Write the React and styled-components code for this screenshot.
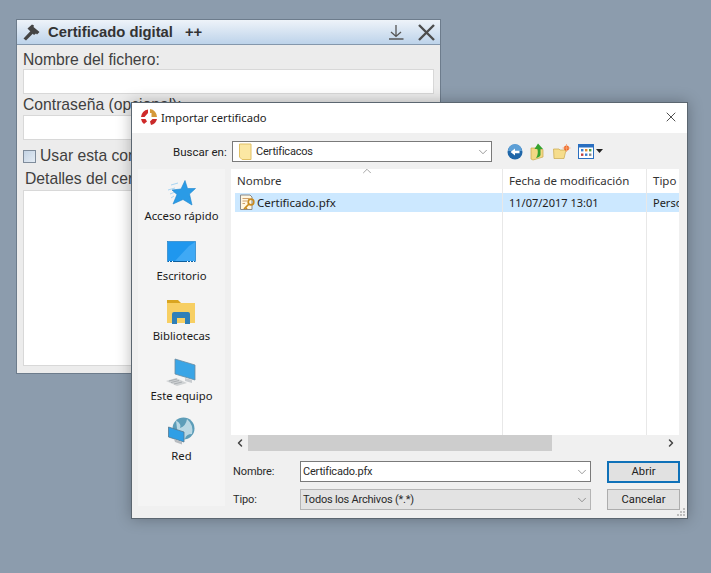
import styled, { createGlobalStyle } from "styled-components";
import { X, ChevronDown, ChevronUp, ChevronLeft, ChevronRight } from "lucide-react";

const GlobalStyle = createGlobalStyle`
  html, body {
    margin: 0;
    height: 100%;
    background: #8c9cad;
    overflow: hidden;
  }
  #root { height: 100%; }
`;

const Desktop = styled.div`
  position: relative;
  width: 711px;
  height: 573px;
  background: #8c9cad;
`;

/* ventana java de atras */
const JavaWindow = styled.div`
  position: absolute;
  left: 16px;
  top: 19px;
  width: 425px;
  height: 355px;
  box-sizing: border-box;
  border: 1px solid #6d7c8c;
  background: #ececec;
  font-family: "Liberation Sans", Arial, sans-serif;
  color: #404040;
  display: flex;
  flex-direction: column;
`;

const JavaTitle = styled.div`
  height: 25px;
  flex: none;
  box-sizing: border-box;
  display: flex;
  align-items: center;
  padding: 0 5px 0 6px;
  background: linear-gradient(#eef3f9, #bdd3ea);
  border-bottom: 1px solid #8497ac;
  color: #333;
`;

const JavaTitleText = styled.span`
  font-size: 14.8px;
  font-weight: 700;
  margin-left: 8px;
`;

const PlusPlus = styled.span`
  font-size: 14.8px;
  font-weight: 700;
  margin-left: 12px;
  flex: 1;
`;

const JavaBody = styled.div`
  flex: 1;
  display: flex;
  flex-direction: column;
  padding: 0 6px 7px 6px;
`;

const JavaLabel = styled.div`
  font-size: 15.7px;
  line-height: 18px;
  margin-top: ${(p) => p.$top || 2}px;
  margin-left: ${(p) => p.$left || 0}px;
  white-space: nowrap;
`;

const JavaInput = styled.div`
  height: 25px;
  flex: none;
  box-sizing: border-box;
  background: #fff;
  border: 1px solid #d8d8d8;
  margin-top: ${(p) => p.$top ?? 1}px;
`;

const JavaCheckRow = styled.div`
  display: flex;
  align-items: center;
  gap: 4px;
  font-size: 15.7px;
  line-height: 18px;
  margin-top: 7px;
  white-space: nowrap;
`;

const JavaCheck = styled.span`
  width: 13px;
  height: 13px;
  box-sizing: border-box;
  border: 1px solid #7f8c9b;
  background: linear-gradient(135deg, #c3d3e4, #e4ecf4);
`;

const JavaArea = styled.div`
  flex: 1;
  background: #fff;
  border: 1px solid #d8d8d8;
  margin-top: 2px;
`;

/* dialogo de windows */
const Dialog = styled.div`
  position: absolute;
  left: 131px;
  top: 102px;
  width: 557px;
  height: 417px;
  box-sizing: border-box;
  border: 1px solid #5b6670;
  background: #f0f0f0;
  box-shadow: 0 0 14px rgba(0, 0, 0, 0.28);
  font-family: "Noto Sans", "Open Sans", sans-serif;
  font-size: 11px;
  color: #1a1a1a;
  display: flex;
  flex-direction: column;
`;

const DialogTitle = styled.div`
  height: 30px;
  flex: none;
  box-sizing: border-box;
  background: #fff;
  display: flex;
  align-items: center;
  padding: 0 8px 2px 8px;
  font-size: 11.2px;
  color: #222;
`;

const DialogTitleText = styled.span`
  margin-left: 3px;
  flex: 1;
`;

const LookRow = styled.div`
  height: 36px;
  flex: none;
  box-sizing: border-box;
  display: flex;
  align-items: center;
  padding: 1px 0 0 41px;
`;

const LookLabel = styled.span`
  width: 59px;
  font-family: Roboto, sans-serif;
  font-size: 11.5px;
  color: #222;
`;

const Combo = styled.div`
  box-sizing: border-box;
  height: 21px;
  width: ${(p) => p.$w}px;
  display: flex;
  align-items: center;
  padding: 0 1px 0 ${(p) => p.$pad || 2}px;
  gap: 4px;
  background: ${(p) => (p.$gray ? "#e3e3e3" : "#fff")};
  border: 1px solid ${(p) => (p.$gray ? "#b5b5b5" : "#7a7a7a")};
  font-family: Roboto, sans-serif;
  font-size: 11px;
  letter-spacing: -0.2px;
  color: #2a2a2a;
`;

const ComboText = styled.span`
  flex: 1;
  white-space: nowrap;
`;

const Tools = styled.div`
  display: flex;
  align-items: center;
  margin-left: 15px;
  gap: 7px;
`;

const Main = styled.div`
  flex: 1;
  min-height: 0;
  display: flex;
  padding: 0 8px 12px 6px;
`;

const Places = styled.div`
  width: 87px;
  flex: none;
  margin-right: 6px;
  background: #f4f4f4;
  display: flex;
  flex-direction: column;
  align-items: center;
  padding-top: 3px;
  box-sizing: border-box;
  font-size: 11.3px;
`;

const Place = styled.div`
  height: 60px;
  flex: none;
  display: flex;
  flex-direction: column;
  align-items: center;
  white-space: nowrap;
`;

const PlaceIcon = styled.div`
  height: 36px;
  flex: none;
  box-sizing: border-box;
  display: flex;
  align-items: flex-end;
  padding-bottom: ${(p) => p.$gap}px;

  svg { display: block; }
`;

const PlaceLabel = styled.span`
  line-height: 16px;
`;

const RightPane = styled.div`
  flex: 1;
  min-width: 0;
  display: flex;
  flex-direction: column;
`;

const List = styled.div`
  height: 282px;
  flex: none;
  background: #fff;
  display: flex;
  flex-direction: column;
  overflow: hidden;
`;

const Columns = styled.div`
  flex: 1;
  min-height: 0;
  display: grid;
  grid-template-columns: 272px 144px 32px;
`;

const Column = styled.div`
  border-right: ${(p) => (p.$last ? "none" : "1px solid #e8e8e8")};
  overflow: hidden;
  position: relative;
  display: flex;
  flex-direction: column;
`;

const HeadCell = styled.div`
  height: 24px;
  flex: none;
  box-sizing: border-box;
  display: flex;
  align-items: center;
  padding: 0 0 2px 6px;
  font-size: 11.5px;
  color: #333;
  white-space: nowrap;
`;

const SortMark = styled.span`
  position: absolute;
  top: -5px;
  left: 129px;
  color: #666;
  line-height: 0;
`;

const RowCell = styled.div`
  height: 19px;
  display: flex;
  align-items: center;
  margin-left: ${(p) => p.$ml || 0}px;
  padding-left: ${(p) => p.$pad || 6}px;
  background: #cce8ff;
  color: #222;
  gap: 1px;
  white-space: nowrap;
  font-size: ${(p) => p.$size || 11}px;
`;

const HScroll = styled.div`
  height: 16px;
  flex: none;
  display: flex;
  align-items: center;
  background: #f0f0f0;
`;

const ScrollBtn = styled.span`
  width: 17px;
  display: flex;
  justify-content: center;
  color: #444;
`;

const ScrollTrack = styled.div`
  flex: 1;
  height: 100%;
`;

const ScrollThumb = styled.div`
  width: 304px;
  height: 100%;
  background: #cdcdcd;
`;

const FormGrid = styled.div`
  display: grid;
  grid-template-columns: 67px 291px 89px;
  row-gap: 6px;
  padding: 10px 0 0 2px;
  align-items: start;
`;

const FormLabel = styled.span`
  font-family: Roboto, sans-serif;
  font-size: 11px;
  line-height: 21px;
  letter-spacing: -0.1px;
  color: #2a2a2a;
`;

const Btn = styled.div`
  box-sizing: border-box;
  height: ${(p) => (p.$primary ? 22 : 21)}px;
  margin-left: 16px;
  padding-bottom: 1px;
  display: flex;
  align-items: center;
  justify-content: center;
  background: #e1e1e1;
  border: ${(p) => (p.$primary ? "2px solid #0f71b8" : "1px solid #adadad")};
  font-family: Roboto, sans-serif;
  font-size: 11.2px;
  color: #222;
`;

const Grip = styled.svg`
  position: absolute;
  right: 1px;
  bottom: 1px;
`;

function Hammer() {
  return (
    <svg width="17" height="17" viewBox="0 0 17 17">
      <path d="M0.5 14.5 L8 6.5 L10.5 9 L3 16.5 Z" fill="#444" />
      <path d="M4.5 4.500 L9 0.500 L11 1.500 L10.500 3 L16.500 8 L14 10.500 L13 9.500 L11 11 Z" fill="#444" />
    </svg>
  );
}

function DownloadMark() {
  return (
    <svg width="16" height="16" viewBox="0 0 16 16" fill="none" stroke="#555" strokeWidth="1.3">
      <path d="M8 1 V12.5 M3 8 L8 12.5 L13 8 M1 15 H15.5" />
    </svg>
  );
}

function CloseMark() {
  return (
    <svg width="17" height="17" viewBox="0 0 17 17" fill="none" stroke="#4d4d4d" strokeWidth="2.4" style={{ marginLeft: 14 }}>
      <path d="M1 1 L16 16 M16 1 L1 16" />
    </svg>
  );
}

function AppLogo() {
  return (
    <svg width="18" height="18" viewBox="0 0 18 18">
      <path d="M10 1 A8 8 0 0 1 17 9 H11.500 V5 H10 Z" fill="#d69a3a" />
      <path d="M8 1.500 V5 L4.500 9 H1 A8 8 0 0 1 8 1.500 Z" fill="#cf2a2a" />
      <path d="M1 11 H5.500 L7 13.500 L4 16 A8 8 0 0 1 1 11 Z" fill="#cf2a2a" />
      <path d="M17 11 A8 8 0 0 1 11 17 L10 13.500 L12.500 11 Z" fill="#c92a2a" />
    </svg>
  );
}

function YellowFolder() {
  return (
    <svg width="13" height="17" viewBox="0 0 13 17">
      <path d="M0.5 1 H12 V16.5 H3 L0.5 14 Z" fill="#fbe7a3" stroke="#e0c066" />
    </svg>
  );
}

function BackIcon() {
  return (
    <svg width="16" height="16" viewBox="0 0 16 16">
      <circle cx="8" cy="8" r="7.5" fill="#1f66a8" />
      <path d="M1 7 A7 7 0 0 1 15 7 Z" fill="#5d9fd6" />
      <path d="M3.5 8 L8 4.5 V6.8 H12.5 V9.2 H8 V11.5 Z" fill="#fff" />
    </svg>
  );
}

function UpIcon() {
  return (
    <svg width="16" height="18" viewBox="0 0 16 18">
      <path d="M1 5 H6 L7 6.5 H13 V14 L3 17 L1 16 Z" fill="#f3d884" stroke="#c9a74c" strokeWidth="0.7" />
      <path d="M8 0.5 L13 6 H10.5 V12 Q10 14 6 15 Q8.5 12 7.5 6 H4.5 Z" fill="#35a32e" />
    </svg>
  );
}

function NewFolderIcon() {
  return (
    <svg width="18" height="16" viewBox="0 0 18 16">
      <path d="M0.5 5 H6 L7 6 H13 L11 14.5 H1 Z" fill="#f6dd8c" stroke="#c9a74c" strokeWidth="0.7" />
      <circle cx="13.5" cy="4" r="2.6" fill="#ee6a2a" />
      <path d="M13.5 0 V8 M9.5 4 H17.5" stroke="#f7a271" strokeWidth="0.8" />
    </svg>
  );
}

function ViewIcon() {
  return (
    <svg width="25" height="15" viewBox="0 0 25 15">
      <rect x="0.5" y="0.5" width="15" height="14" fill="#fff" stroke="#2a6fc0" />
      <rect x="1" y="1" width="14" height="2.5" fill="#2a6fc0" />
      <rect x="3" y="5" width="2.4" height="2.400" fill="#3a7fd0" />
      <rect x="7" y="5" width="2.4" height="2.400" fill="#e08a30" />
      <rect x="11" y="5" width="2.4" height="2.400" fill="#4aa04a" />
      <rect x="3" y="9.500" width="2.4" height="2.400" fill="#c04040" />
      <rect x="7" y="9.500" width="2.4" height="2.400" fill="#3a7fd0" />
      <rect x="11" y="9.500" width="2.4" height="2.400" fill="#888" />
      <path d="M18 5 H25 L21.5 9 Z" fill="#222" />
    </svg>
  );
}

function StarIcon() {
  return (
    <svg width="29" height="26" viewBox="0 0 29 26">
      <path d="M4 5 L11 3 M1 10 L8 8 M3 14 L8 12 M4 18 L7 16" stroke="#a8d4f2" strokeWidth="1" />
      <path d="M18 0.500 L20.500 8.500 L28.500 8.500 L22.500 14 L25 25 L16 19.500 L6 24 L10 14.500 L5 10 L14 9 Z" fill="#2a9be6" stroke="#1b84cf" strokeWidth="0.6" />
    </svg>
  );
}

function DesktopIcon() {
  return (
    <svg width="29" height="22" viewBox="0 0 29 22">
      <rect x="0.500" y="0.500" width="28" height="20" fill="#1f97ee" stroke="#1579c2" strokeWidth="0.600" />
      <path d="M8 20 L22 5 L28 1 V20 Z" fill="#3fa9f5" />
      <path d="M1 20.500 H28" stroke="#0c5f9e" strokeWidth="1" />
      <path d="M2 20.500 H6 M20 20.500 H27" stroke="#fff" strokeWidth="1" strokeDasharray="1 2" />
    </svg>
  );
}

function LibraryIcon() {
  return (
    <svg width="29" height="25" viewBox="0 0 29 25">
      <path d="M0 1 H11 L14 4 H0 Z" fill="#d9a520" />
      <rect x="0" y="4" width="28" height="20" fill="#f7cf63" />
      <path d="M5 25 V15 Q5 13 7 13 H21 Q23 13 23 15 V25 H18 V19 H10 V25 Z" fill="#2f7fb8" />
    </svg>
  );
}

function ComputerIcon() {
  return (
    <svg width="32" height="28" viewBox="0 0 32 28">
      <path d="M10 1 L30 7 V22 L10 16 Z" fill="#3aa5e6" stroke="#6c8ba0" strokeWidth="0.8" />
      <path d="M20 20 L27 22 V25 L20 23 Z" fill="#c8ccd0" />
      <path d="M1 23 L11 20 L22 25 L12 28 Z" fill="#cfd2d4" />
      <path d="M4 23 L12 21 M6 24.500 L14 22.500 M9 26 L17 24" stroke="#9fa4a8" strokeWidth="0.8" />
    </svg>
  );
}

function NetworkIcon() {
  return (
    <svg width="28" height="28" viewBox="0 0 28 28">
      <circle cx="15.500" cy="11.500" r="11" fill="#5d9db8" />
      <path d="M8 3.500 Q14 7 12 11 Q18 9 19 2 Q26 8 24 17 Q18 17 17 22 L10 19 Z" fill="#b9d8e4" />
      <path d="M0.500 10 L16 15 V25 L0.500 20 Z" fill="#2f9fe6" stroke="#56788f" strokeWidth="0.8" />
      <path d="M6 22 L14 25 V27.500 L7 25 Z" fill="#b8bcc0" />
    </svg>
  );
}

function PfxIcon() {
  return (
    <svg width="17" height="17" viewBox="0 0 17 17">
      <path d="M1.5 1 H11 L13 3 V15.500 H1.500 Z" fill="#fff6e0" stroke="#8a8a8a" />
      <path d="M3.5 4.500 H10.500 M3.500 7 H8 M3.500 9.500 H6" stroke="#c08a50" strokeWidth="0.8" />
      <circle cx="12" cy="8" r="2.8" fill="none" stroke="#c98a1e" strokeWidth="1.700" />
      <path d="M10 10 L5 15 M6.500 13.500 L8 15" stroke="#c98a1e" strokeWidth="1.700" fill="none" />
    </svg>
  );
}

const PLACES = [
  { label: "Acceso rápido", gap: 2, Icon: StarIcon },
  { label: "Escritorio", gap: 5, Icon: DesktopIcon },
  { label: "Bibliotecas", gap: 4, Icon: LibraryIcon },
  { label: "Este equipo", gap: 2, Icon: ComputerIcon },
  { label: "Red", gap: 3, Icon: NetworkIcon },
];

export default function App() {
  return (
    <Desktop>
      <GlobalStyle />
      <JavaWindow>
        <JavaTitle>
          <Hammer />
          <JavaTitleText>Certificado digital</JavaTitleText>
          <PlusPlus>++</PlusPlus>
          <DownloadMark />
          <CloseMark />
        </JavaTitle>
        <JavaBody>
          <JavaLabel $top={6}>Nombre del fichero:</JavaLabel>
          <JavaInput $top={0} />
          <JavaLabel>Contraseña (opcional):</JavaLabel>
          <JavaInput />
          <JavaCheckRow>
            <JavaCheck />
            Usar esta contraseña
          </JavaCheckRow>
          <JavaLabel $top={5} $left={2}>Detalles del certificado:</JavaLabel>
          <JavaArea />
        </JavaBody>
      </JavaWindow>

      <Dialog>
        <DialogTitle>
          <AppLogo />
          <DialogTitleText>Importar certificado</DialogTitleText>
          <X size={16} strokeWidth={1.2} color="#222" />
        </DialogTitle>
        <LookRow>
          <LookLabel>Buscar en:</LookLabel>
          <Combo $w={260} $pad={6}>
            <YellowFolder />
            <ComboText>Certificacos</ComboText>
            <ChevronDown size={14} strokeWidth={1} color="#555" />
          </Combo>
          <Tools>
            <BackIcon />
            <UpIcon />
            <NewFolderIcon />
            <ViewIcon />
          </Tools>
        </LookRow>
        <Main>
          <Places>
            {PLACES.map(({ label, gap, Icon }) => (
              <Place key={label}>
                <PlaceIcon $gap={gap}><Icon /></PlaceIcon>
                <PlaceLabel>{label}</PlaceLabel>
              </Place>
            ))}
          </Places>
          <RightPane>
            <List>
              <Columns>
                <Column>
                  <SortMark><ChevronUp size={14} strokeWidth={1} /></SortMark>
                  <HeadCell>Nombre</HeadCell>
                  <RowCell $ml={4} $pad={4} $size={11.5}><PfxIcon />Certificado.pfx</RowCell>
                </Column>
                <Column>
                  <HeadCell>Fecha de modificación</HeadCell>
                  <RowCell>11/07/2017 13:01</RowCell>
                </Column>
                <Column $last>
                  <HeadCell>Tipo</HeadCell>
                  <RowCell>Perso</RowCell>
                </Column>
              </Columns>
              <HScroll>
                <ScrollBtn><ChevronLeft size={12} strokeWidth={3} /></ScrollBtn>
                <ScrollTrack><ScrollThumb /></ScrollTrack>
                <ScrollBtn><ChevronRight size={12} strokeWidth={3} /></ScrollBtn>
              </HScroll>
            </List>
            <FormGrid>
              <FormLabel>Nombre:</FormLabel>
              <Combo $w={291}>
                <ComboText>Certificado.pfx</ComboText>
                <ChevronDown size={14} strokeWidth={1} color="#555" />
              </Combo>
              <Btn $primary>Abrir</Btn>
              <FormLabel>Tipo:</FormLabel>
              <Combo $w={291} $gray>
                <ComboText>Todos los Archivos (*.*)</ComboText>
                <ChevronDown size={14} strokeWidth={1} color="#555" />
              </Combo>
              <Btn>Cancelar</Btn>
            </FormGrid>
          </RightPane>
        </Main>
        <Grip width="10" height="10" viewBox="0 0 10 10" fill="#bdbdbd">
          <rect x="7" y="1" width="2" height="2" />
          <rect x="4" y="4" width="2" height="2" />
          <rect x="7" y="4" width="2" height="2" />
          <rect x="1" y="7" width="2" height="2" />
          <rect x="4" y="7" width="2" height="2" />
          <rect x="7" y="7" width="2" height="2" />
        </Grip>
      </Dialog>
    </Desktop>
  );
}
